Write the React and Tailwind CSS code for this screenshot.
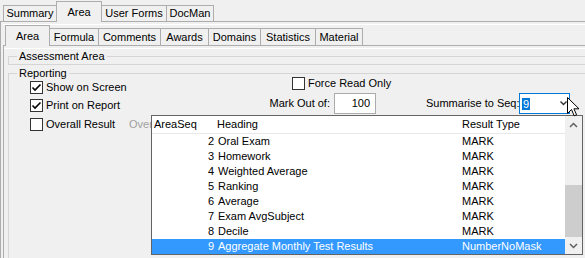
import React from "react";

const rows = [
  { seq: 2, heading: "Oral Exam", type: "MARK" },
  { seq: 3, heading: "Homework", type: "MARK" },
  { seq: 4, heading: "Weighted Average", type: "MARK" },
  { seq: 5, heading: "Ranking", type: "MARK" },
  { seq: 6, heading: "Average", type: "MARK" },
  { seq: 7, heading: "Exam AvgSubject", type: "MARK" },
  { seq: 8, heading: "Decile", type: "MARK" },
  { seq: 9, heading: "Aggregate Monthly Test Results", type: "NumberNoMask", selected: true },
];

const Check = ({ checked }) => (
  <div className="flex h-[13px] w-[13px] shrink-0 items-center justify-center border border-[#333333] bg-white">
    {checked && (
      <svg width="11" height="11" viewBox="0 0 11 11">
        <path d="M1.5 5.5 L4 8 L9.5 2.5" fill="none" stroke="#000" strokeWidth="1.6" />
      </svg>
    )}
  </div>
);

const CheckRow = ({ checked, label, className }) => (
  <div className={"flex h-[13px] items-center " + (className || "")}>
    <Check checked={checked} />
    <span className="ml-[3px] leading-[13px]">{label}</span>
  </div>
);

const Chevron = ({ up }) => (
  <svg width="9" height="6" viewBox="0 0 9 6">
    <path
      d={up ? "M1 5 L4.5 1.5 L8 5" : "M1 1 L4.5 4.5 L8 1"}
      fill="none"
      stroke="#606060"
      strokeWidth="1.5"
    />
  </svg>
);

export default function App() {
  return (
    <div className="relative flex h-[258px] w-[585px] flex-col overflow-hidden bg-[#f0f0f0] font-['Liberation_Sans',Arial,sans-serif] text-[11px] text-black">
      {/* top tabs */}
      <div className="flex h-[21px] shrink-0 items-end pl-[3px]">
        <div className="flex h-[16px] w-[54px] items-center justify-center border border-b-0 border-[#adadad]">
          Summary
        </div>
        <div className="relative z-10 -mb-px -ml-px flex h-[21px] w-[46px] items-center justify-center border border-b-0 border-[#adadad] bg-[#f0f0f0]">
          Area
        </div>
        <div className="-ml-px flex h-[16px] w-[66px] items-center justify-center border border-b-0 border-[#adadad]">
          User Forms
        </div>
        <div className="-ml-px flex h-[16px] w-[48px] items-center justify-center border border-b-0 border-[#adadad]">
          DocMan
        </div>
      </div>

      {/* outer panel */}
      <div className="flex flex-1 flex-col border-l border-t border-[#adadad]">
        <div className="h-[2px]" />
        <div className="ml-[2px] h-px bg-white" />
        <div className="flex h-[20px] items-end pl-[4px]">
          <div className="relative z-10 -mb-px flex h-[21px] w-[45px] items-center justify-center border border-b-0 border-[#adadad] bg-[#f0f0f0]">
            Area
          </div>
          <div className="-ml-px flex h-[17px] w-[50px] items-center justify-center border border-b-0 border-[#adadad]">
            Formula
          </div>
          <div className="-ml-px flex h-[17px] w-[63px] items-center justify-center border border-b-0 border-[#adadad]">
            Comments
          </div>
          <div className="-ml-px flex h-[17px] w-[49px] items-center justify-center border border-b-0 border-[#adadad]">
            Awards
          </div>
          <div className="-ml-px flex h-[17px] w-[53px] items-center justify-center border border-b-0 border-[#adadad]">
            Domains
          </div>
          <div className="-ml-px flex h-[17px] w-[56px] items-center justify-center border border-b-0 border-[#adadad]">
            Statistics
          </div>
          <div className="-ml-px flex h-[17px] w-[48px] items-center justify-center border border-b-0 border-[#adadad]">
            Material
          </div>
        </div>

        {/* inner panel */}
        <div className="ml-[2px] flex-1 border-l border-t border-[#adadad]">
          <div className="mt-[2px] h-px bg-white" />
          <div className="pl-[4px]">
            <fieldset className="mt-[1px] border border-r-0 border-[#d5d5d5]">
              <legend className="ml-[8px] px-[2px] leading-[13px]">Assessment Area</legend>
              <div className="h-px" />
            </fieldset>

            <fieldset className="mt-[2px] border-l border-t border-[#d5d5d5]">
              <legend className="ml-[8px] px-[2px] leading-[13px]">Reporting</legend>
              <div className="flex h-[200px]">
                <div className="w-[257px] shrink-0 pl-[21px] pt-[1px]">
                  <CheckRow checked label="Show on Screen" />
                  <CheckRow checked label="Print on Report" className="mt-[5px]" />
                  <div className="mt-[6px] flex h-[13px] items-center">
                    <Check />
                    <span className="ml-[3px] w-[80px] leading-[13px]">Overall Result</span>
                    {/* label is cut off by the open list */}
                    <span className="ml-[3px] w-[22px] overflow-hidden whitespace-nowrap leading-[13px] text-[#a0a0a0]">
                      Over
                    </span>
                  </div>
                </div>

                <div className="-mt-[3px] flex flex-col">
                  <CheckRow label="Force Read Only" className="pl-[26px]" />
                  <div className="mt-[3px] flex h-[21px] items-center">
                    <span className="w-[64px] text-right">Mark Out of:</span>
                    <div className="ml-[4px] flex h-[21px] w-[42px] items-center justify-end border border-[#ababab] bg-white pr-[5px]">
                      100
                    </div>
                    <span className="ml-[50px] w-[89px] whitespace-nowrap text-right">Summarise to Seq:</span>
                    <div className="relative ml-[4px] flex h-[21px] w-[51px] items-center border border-[#0078d7] bg-white pl-[2px]">
                      <span className="bg-[#0078d7] px-px leading-[12px] text-white">9</span>
                      <div className="ml-auto mr-[2px] flex">
                        <svg width="7" height="5" viewBox="0 0 7 5">
                          <path d="M0.5 0.5 L3.5 3.5 L6.5 0.5" fill="none" stroke="#333" strokeWidth="1.4" />
                        </svg>
                      </div>
                    </div>
                  </div>
                </div>
              </div>
            </fieldset>
          </div>
        </div>
      </div>

      {/* dropdown list */}
      <div className="absolute left-[151px] top-[115px] z-20 flex h-[140px] w-[432px] border border-[#646464] bg-white">
        <div className="flex flex-1 flex-col">
          <div className="flex h-[17px] items-center">
            <span className="w-[62px] pl-[2px]">AreaSeq</span>
            <span className="w-[247px] pl-[3px]">Heading</span>
            <span className="pl-[1px]">Result Type</span>
          </div>
          <div className="h-px bg-[#e8e8e8]" />
          {rows.map((r) => (
            <div
              key={r.seq}
              className={
                r.selected
                  ? "flex h-[15px] items-center bg-[#3399ff] text-white"
                  : "flex h-[15px] items-center"
              }
            >
              <span className="w-[62px] text-right">{r.seq}</span>
              <span className="w-[247px] whitespace-nowrap pl-[4px]">{r.heading}</span>
              <span className="pl-[1px]">{r.type}</span>
            </div>
          ))}
        </div>
        <div className="flex w-[17px] flex-col bg-[#f0f0f0]">
          <div className="flex h-[17px] items-center justify-center">
            <Chevron up />
          </div>
          <div className="flex-1">
            <div className="mt-[52px] h-[52px] bg-[#cdcdcd]" />
          </div>
          <div className="flex h-[17px] items-center justify-center">
            <Chevron />
          </div>
        </div>
      </div>

      {/* mouse cursor */}
      <svg
        className="absolute left-[567px] top-[97px] z-30"
        width="13"
        height="21"
        viewBox="0 0 13 21"
      >
        <path
          d="M0.5 0.5 L0.5 16.5 L4.5 12.5 L7.2 18.8 L9.6 17.8 L6.9 11.8 L12 11.8 Z"
          fill="#fff"
          stroke="#000"
          strokeWidth="1"
        />
      </svg>
    </div>
  );
}
